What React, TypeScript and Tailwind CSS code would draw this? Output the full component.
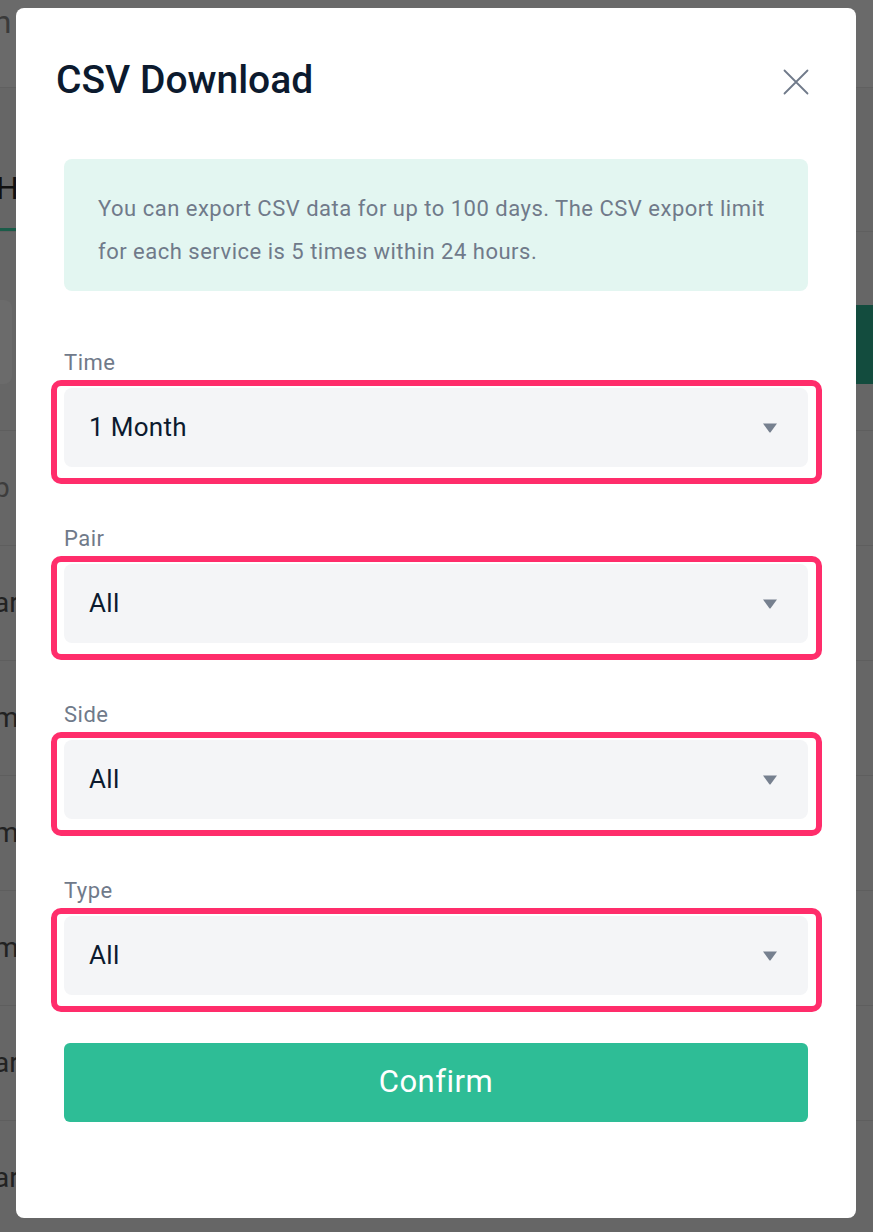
import React from "react";

function Caret() {
  return (
    <svg width="14" height="10" viewBox="0 0 14 10" className="shrink-0">
      <path d="M0 0.5 H14 L7.8 9 Q7 10 6.2 9 Z" fill="#76808f" />
    </svg>
  );
}

function CloseIcon() {
  return (
    <svg width="26" height="26" viewBox="0 0 26 26">
      <path d="M1.5 1.5 L24.5 24.5 M24.5 1.5 L1.5 24.5" stroke="#707a8a" strokeWidth="1.8" strokeLinecap="round" fill="none" />
    </svg>
  );
}

function Field({ label, value }: { label: string; value: string }) {
  return (
    <div className="flex flex-col">
      <div className="h-[24px] text-[22px] leading-[24px] tracking-[0.5px] text-[#707a8a]">{label}</div>
      <div className="relative mt-[13px]">
        <div className="flex h-[79px] items-center justify-between rounded-[8px] bg-[#f4f5f7] pl-[25px] pr-[31px]">
          <span className="text-[26px] tracking-[0.3px] text-[#0c1a2e]">{value}</span>
          <Caret />
        </div>
        <div className="pointer-events-none absolute left-[-13px] right-[-14px] top-[-8px] bottom-[-17px] rounded-[10px] border-[6px] border-[#ff2d6b]" />
      </div>
    </div>
  );
}

const rows = [
  { t: "p", c: "text-[#3d3d3d]" },
  { t: "ar", c: "text-[#222]" },
  { t: "m", c: "text-[#222]" },
  { t: "m", c: "text-[#222]" },
  { t: "m", c: "text-[#222]" },
  { t: "ar", c: "text-[#222]" },
  { t: "ar", c: "text-[#222]" },
];

export default function App() {
  return (
    <div className="relative h-[1232px] w-[873px] overflow-hidden bg-[#666666] font-['Roboto',sans-serif]">
      {/* underlying page, dimmed */}
      <div className="flex flex-col">
        <div className="flex h-[88px] items-start border-b border-[#606060] bg-[#6a6a6a]">
          <span className="ml-[-14px] mt-[2px] text-[32px] leading-[40px] text-[#3a3a3a]">in</span>
        </div>
        <div className="h-[144px] border-b border-[#5f5f5f]">
          <div className="flex h-full flex-col justify-end">
            <span className="ml-[-4px] mb-[20px] text-[32px] leading-[40px] text-[#111]">Hi</span>
            <div className="h-[3px] w-[16px] bg-[#1b5c49]" />
          </div>
        </div>
        <div className="mt-[68px] flex h-[84px] items-stretch justify-between">
          <div className="ml-[-10px] w-[22px] rounded-[8px] bg-[#6b6b6b]" />
          <div className="mt-[5px] w-[60px] bg-[#134c3e]" />
        </div>
        <div className="mt-[46px] flex flex-col border-t border-[#5e5e5e]">
          {rows.map((r, i) => (
            <div key={i} className="flex h-[115px] items-center border-b border-[#5e5e5e]">
              <span className={`ml-[-6px] text-[28px] ${r.c}`}>{r.t}</span>
            </div>
          ))}
        </div>
      </div>

      {/* modal */}
      <div className="absolute left-[16px] top-[8px] flex h-[1210px] w-[840px] flex-col rounded-[8px] bg-white px-[48px]">
        <div className="ml-[-8px] mt-[50px] flex h-[44px] items-center justify-between">
          <h1 className="text-[39px] font-medium leading-[44px] text-[#0c1a2e]">CSV Download</h1>
          <div className="mr-[-1px] mt-[4px]">
            <CloseIcon />
          </div>
        </div>
        <div className="mt-[57px] h-[132px] rounded-[8px] bg-[#e3f6f1] px-[34px] pt-[28px] text-[22px] leading-[43px] tracking-[0.5px] text-[#707a8a]">
          You can export CSV data for up to 100 days. The CSV export limit for each service is 5 times within 24 hours.
        </div>
        <div className="mt-[60px] flex flex-col gap-[60px]">
          <Field label="Time" value="1 Month" />
          <Field label="Pair" value="All" />
          <Field label="Side" value="All" />
          <Field label="Type" value="All" />
        </div>
        <button className="mt-[48px] flex h-[79px] items-center justify-center rounded-[6px] bg-[#2ebd96] text-[31px] tracking-[0.5px] text-white">
          Confirm
        </button>
      </div>
    </div>
  );
}
